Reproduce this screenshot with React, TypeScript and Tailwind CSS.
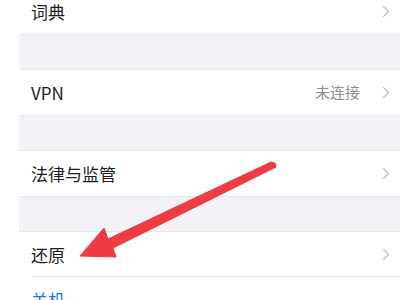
import React from 'react';

const Chevron = () => (
  <svg width="8" height="13" viewBox="0 0 8 13" className="shrink-0">
    <path d="M1.5 1.5 L6.5 6.5 L1.5 11.5" fill="none" stroke="#c7c7cc" strokeWidth="1.6" strokeLinecap="round" strokeLinejoin="round" />
  </svg>
);

const Row = ({ label, value, last }: { label: string; value?: string; last?: boolean }) => (
  <div className="relative h-[45px] flex items-center pl-[12px] pr-[10px] bg-white">
    <span className="text-[17px] text-[#1c1c1e] flex-1">{label}</span>
    {value && <span className="text-[15px] text-[#8e8e93] mr-[22px]">{value}</span>}
    <Chevron />
    {!last && <div className="absolute left-[12px] right-0 bottom-0 h-px bg-[#e3e3e8]" />}
  </div>
);

const Band = () => <div className="h-[36px] bg-[#f2f2f7] border-y border-[#e6e6eb]" />;

export default function App() {
  return (
    <div
      className="relative w-[400px] h-[300px] overflow-hidden bg-white"
      style={{ fontFamily: '"Noto Sans CJK SC", "Liberation Sans", sans-serif' }}
    >
      <div className="ml-[19px] -mt-[11px] flex flex-col">
        <Row label="词典" last />
        <Band />
        <Row label="VPN" value="未连接" last />
        <Band />
        <Row label="法律与监管" last />
        <Band />
        <Row label="还原" />
        <div className="h-[45px] flex items-center pl-[12px]">
          <span className="text-[17px] text-[#007aff]">关机</span>
        </div>
      </div>

      {/* red annotation arrow */}
      <svg className="absolute inset-0 pointer-events-none" width="400" height="300" viewBox="0 0 400 300">
        <polygon
          points="80,256 104,228 108,239 271,162 275,163 276,167 113,248 116,257"
          fill="#ef3b43"
          stroke="#ef3b43"
          strokeWidth="1"
          strokeLinejoin="round"
        />
      </svg>
    </div>
  );
}
